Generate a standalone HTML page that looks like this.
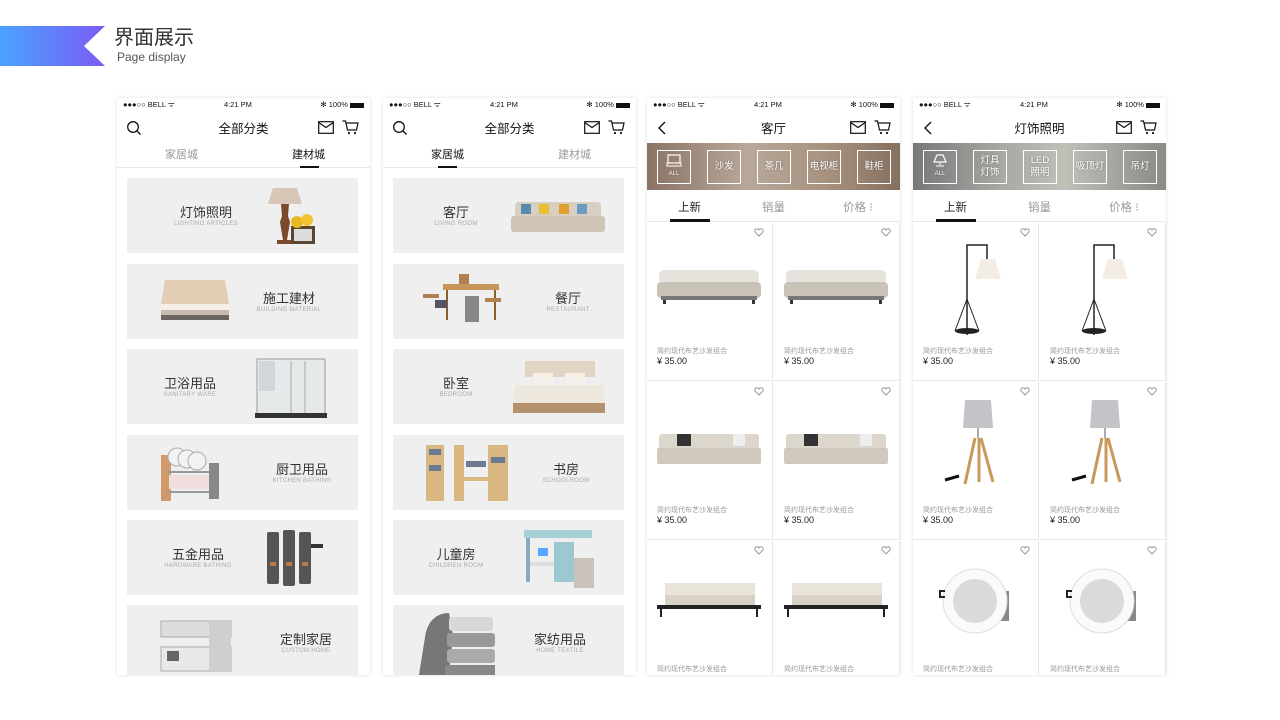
<!DOCTYPE html>
<html><head><meta charset="utf-8"><style>
*{margin:0;padding:0;box-sizing:border-box}
body{width:1280px;height:720px;background:#fff;position:relative;overflow:hidden;font-family:"Liberation Sans","Noto Sans CJK SC",sans-serif;color:#222}
.a{position:absolute}
.phone{position:absolute;top:98px;width:253px;height:577px;background:#fff;box-shadow:0 0 4px rgba(0,0,0,.12);overflow:hidden}
.sb{position:absolute;top:2px;left:0;width:100%;height:12px;font-size:7.5px;color:#111}
.nav{position:absolute;top:20px;left:0;width:100%;text-align:center;font-size:12.5px;color:#111}
.tabs{position:absolute;top:44px;left:0;width:100%;height:26px;border-bottom:1px solid #e6e6e6;font-size:11px}
.card{position:absolute;left:10px;width:231px;height:75px;background:#efefef}
.card .t{position:absolute;width:110px;text-align:center;top:24px;font-size:13px;color:#333}
.card .e{position:absolute;width:110px;text-align:center;top:43px;font-size:6px;color:#aaa;letter-spacing:.3px}
.cell{position:absolute;width:126px;height:158px;border-right:1px solid #e8e8e8;border-bottom:1px solid #e8e8e8}
.cell .n{position:absolute;left:10px;top:123px;font-size:7px;color:#999}
.cell .p{position:absolute;left:10px;top:133px;font-size:9px;color:#222}
.cell .h{position:absolute;right:8px;top:5px}
.ban{position:absolute;top:45px;left:0;width:253px;height:47px;background:linear-gradient(90deg,#8a7365,#b8a89a 40%,#a89280 70%,#857060)}
.bx{position:absolute;top:7px;width:34px;height:34px;border:1.5px solid #fff;color:#fff;font-size:9.5px;text-align:center;display:flex;align-items:center;justify-content:center;line-height:12px;text-shadow:0 0 2px rgba(0,0,0,.4)}
</style></head><body>

<div class="a" style="left:0;top:26px;width:105px;height:40px;background:linear-gradient(90deg,#4aa3ff,#7b5cf5);clip-path:polygon(0 0,100% 0,80% 50%,100% 100%,0 100%)"></div>
<div class="a" style="left:114px;top:28px;font-size:20px;line-height:1;color:#333">界面展示</div>
<div class="a" style="left:117px;top:51px;font-size:12px;line-height:1;color:#555">Page display</div>

<!-- PHONE 1 -->
<div class="phone" style="left:117px">
 <div class="sb"><span class="a" style="left:6px">●●●○○ BELL ᯤ</span><span class="a" style="left:107px">4:21 PM</span><span class="a" style="right:6px">✻ 100% <span style="display:inline-block;width:14px;height:5px;background:#111;vertical-align:middle"></span></span></div>
 <svg class="a" style="left:9px;top:22px" width="16" height="16" viewBox="0 0 16 16"><circle cx="7" cy="7" r="5.3" fill="none" stroke="#111" stroke-width="1.3"/><path d="M11 11l3.5 3.5" stroke="#111" stroke-width="1.3"/></svg>
 <div class="nav">全部分类</div>
 <svg class="a" style="left:201px;top:23px" width="16" height="13" viewBox="0 0 16 13"><rect x=".7" y=".7" width="14.6" height="11.6" fill="none" stroke="#111" stroke-width="1.2"/><path d="M.7 1.5l7.3 5 7.3-5" fill="none" stroke="#111" stroke-width="1.2"/></svg>
 <svg class="a" style="left:225px;top:22px" width="17" height="15" viewBox="0 0 17 15"><path d="M.5 1h3l2 9h9l1.5-7H4.5" fill="none" stroke="#111" stroke-width="1.2"/><circle cx="7" cy="13" r="1.1" fill="#111"/><circle cx="13" cy="13" r="1.1" fill="#111"/></svg>
 <div class="tabs"><span class="a" style="left:48px;top:4px;color:#999">家居城</span><span class="a" style="left:175px;top:4px;color:#111">建材城</span><div class="a" style="left:183px;top:24px;width:19px;height:2px;background:#111"></div></div>

 <div class="card" style="top:80px"><div class="t" style="left:24px">灯饰照明</div><div class="e" style="left:24px">LIGHTING ARTICLES</div>
  <svg class="a" style="left:138px;top:8px" width="60" height="62"><path d="M8 2h24l5 16H3z" fill="#d8c7b6"/><path d="M16 18h8l-1 12 2 6-3 18h6v4H12v-4h6l-3-18 2-6z" fill="#7a4a2a"/><rect x="26" y="40" width="24" height="18" fill="#5a4530"/><rect x="29" y="43" width="18" height="12" fill="#ddd"/><circle cx="32" cy="36" r="6" fill="#e8b820"/><circle cx="42" cy="34" r="6" fill="#f0c330"/></svg></div>
 <div class="card" style="top:166px"><div class="t" style="left:107px">施工建材</div><div class="e" style="left:107px">BUILDING MATERIAL</div>
  <svg class="a" style="left:32px;top:14px" width="72" height="46"><path d="M6 2h60l4 24H2z" fill="#e4cdb5"/><rect x="2" y="26" width="68" height="6" fill="#f4eee8"/><rect x="2" y="32" width="68" height="5" fill="#c8bcb2"/><rect x="2" y="37" width="68" height="5" fill="#6c6460"/></svg></div>
 <div class="card" style="top:251px"><div class="t" style="left:8px">卫浴用品</div><div class="e" style="left:8px">SANITARY WARE</div>
  <svg class="a" style="left:128px;top:8px" width="72" height="64"><rect x="2" y="2" width="68" height="56" fill="#e6e9ea" stroke="#999"/><rect x="4" y="4" width="16" height="30" fill="#cfd6dc"/><path d="M36 4v54M50 4v54" stroke="#aaa"/><rect x="0" y="56" width="72" height="5" fill="#333"/></svg></div>
 <div class="card" style="top:337px"><div class="t" style="left:120px">厨卫用品</div><div class="e" style="left:120px">KITCHEN BATHING</div>
  <svg class="a" style="left:32px;top:8px" width="66" height="62"><rect x="2" y="12" width="10" height="46" fill="#d29a6a"/><g fill="#f2f2f2" stroke="#aaa"><circle cx="18" cy="14" r="9"/><circle cx="28" cy="16" r="9"/><circle cx="38" cy="18" r="9"/></g><rect x="8" y="28" width="52" height="2" fill="#999"/><rect x="8" y="48" width="52" height="2" fill="#999"/><rect x="10" y="32" width="40" height="14" fill="#f0dede"/><rect x="50" y="20" width="10" height="36" fill="#888"/></svg></div>
 <div class="card" style="top:422px"><div class="t" style="left:16px">五金用品</div><div class="e" style="left:16px">HARDWARE BATHING</div>
  <svg class="a" style="left:138px;top:8px" width="60" height="62"><g fill="#555"><rect x="2" y="4" width="12" height="52" rx="2"/><rect x="18" y="2" width="12" height="56" rx="2"/><rect x="34" y="4" width="12" height="52" rx="2"/></g><g fill="#b87a4a"><rect x="5" y="34" width="6" height="4"/><rect x="21" y="34" width="6" height="4"/><rect x="37" y="34" width="6" height="4"/></g><rect x="46" y="16" width="12" height="4" fill="#333"/></svg></div>
 <div class="card" style="top:507px"><div class="t" style="left:124px">定制家居</div><div class="e" style="left:124px">CUSTOM HOME</div>
  <svg class="a" style="left:32px;top:12px" width="76" height="56"><rect x="2" y="4" width="70" height="16" fill="#ddd" stroke="#aaa"/><rect x="2" y="30" width="70" height="24" fill="#e8e8e8" stroke="#aaa"/><rect x="50" y="4" width="22" height="50" fill="#cfcfcf"/><rect x="8" y="34" width="12" height="10" fill="#666"/></svg></div>
</div>

<!-- PHONE 2 -->
<div class="phone" style="left:383px">
 <div class="sb"><span class="a" style="left:6px">●●●○○ BELL ᯤ</span><span class="a" style="left:107px">4:21 PM</span><span class="a" style="right:6px">✻ 100% <span style="display:inline-block;width:14px;height:5px;background:#111;vertical-align:middle"></span></span></div>
 <svg class="a" style="left:9px;top:22px" width="16" height="16" viewBox="0 0 16 16"><circle cx="7" cy="7" r="5.3" fill="none" stroke="#111" stroke-width="1.3"/><path d="M11 11l3.5 3.5" stroke="#111" stroke-width="1.3"/></svg>
 <div class="nav">全部分类</div>
 <svg class="a" style="left:201px;top:23px" width="16" height="13" viewBox="0 0 16 13"><rect x=".7" y=".7" width="14.6" height="11.6" fill="none" stroke="#111" stroke-width="1.2"/><path d="M.7 1.5l7.3 5 7.3-5" fill="none" stroke="#111" stroke-width="1.2"/></svg>
 <svg class="a" style="left:225px;top:22px" width="17" height="15" viewBox="0 0 17 15"><path d="M.5 1h3l2 9h9l1.5-7H4.5" fill="none" stroke="#111" stroke-width="1.2"/><circle cx="7" cy="13" r="1.1" fill="#111"/><circle cx="13" cy="13" r="1.1" fill="#111"/></svg>
 <div class="tabs"><span class="a" style="left:48px;top:4px;color:#111">家居城</span><span class="a" style="left:175px;top:4px;color:#999">建材城</span><div class="a" style="left:55px;top:24px;width:19px;height:2px;background:#111"></div></div>

 <div class="card" style="top:80px"><div class="t" style="left:8px">客厅</div><div class="e" style="left:8px">LIVING ROOM</div>
  <svg class="a" style="left:118px;top:20px" width="94" height="40"><rect x="4" y="4" width="86" height="18" rx="4" fill="#d8cfc2"/><rect x="10" y="6" width="10" height="10" fill="#5a8ab0"/><rect x="28" y="6" width="10" height="10" fill="#e8c030"/><rect x="48" y="6" width="10" height="10" fill="#e0a030"/><rect x="66" y="6" width="10" height="10" fill="#6a9bc0"/><rect x="0" y="18" width="94" height="16" rx="3" fill="#cfc4b5"/></svg></div>
 <div class="card" style="top:166px"><div class="t" style="left:120px">餐厅</div><div class="e" style="left:120px">RESTAURANT</div>
  <svg class="a" style="left:22px;top:6px" width="100" height="64"><rect x="28" y="14" width="56" height="6" fill="#c8955a"/><path d="M32 20v30M80 20v30" stroke="#8a6030" stroke-width="2"/><g fill="#b58050"><rect x="8" y="24" width="16" height="4"/><rect x="44" y="4" width="10" height="10"/><rect x="70" y="28" width="16" height="4"/></g><rect x="50" y="26" width="14" height="26" fill="#888"/><rect x="20" y="30" width="12" height="8" fill="#556"/></svg></div>
 <div class="card" style="top:251px"><div class="t" style="left:8px">卧室</div><div class="e" style="left:8px">BEDROOM</div>
  <svg class="a" style="left:118px;top:10px" width="96" height="60"><rect x="14" y="2" width="70" height="16" fill="#e0d4c4"/><path d="M4 26h88l2 20H2z" fill="#eee7dd"/><rect x="2" y="44" width="92" height="10" fill="#b49270"/><rect x="22" y="14" width="20" height="10" fill="#f6f0e8"/><rect x="54" y="14" width="20" height="10" fill="#f6f0e8"/></svg></div>
 <div class="card" style="top:337px"><div class="t" style="left:118px">书房</div><div class="e" style="left:118px">SCHOOLROOM</div>
  <svg class="a" style="left:33px;top:10px" width="82" height="56"><g fill="#d8b880"><rect x="0" y="0" width="18" height="56"/><rect x="28" y="0" width="10" height="56"/><rect x="62" y="0" width="20" height="56"/><rect x="38" y="32" width="24" height="4"/></g><g fill="#6a7a90"><rect x="3" y="4" width="12" height="6"/><rect x="3" y="20" width="12" height="6"/><rect x="65" y="12" width="14" height="6"/><rect x="40" y="16" width="20" height="6"/></g></svg></div>
 <div class="card" style="top:422px"><div class="t" style="left:8px">儿童房</div><div class="e" style="left:8px">CHILDREN ROOM</div>
  <svg class="a" style="left:131px;top:8px" width="80" height="64"><rect x="0" y="2" width="68" height="8" fill="#a8d0d8"/><rect x="2" y="10" width="4" height="44" fill="#8ab"/><rect x="30" y="14" width="20" height="40" fill="#9cc8d2"/><rect x="6" y="34" width="24" height="4" fill="#ddd"/><path d="M50 30h20v30H50z" fill="#c9c2bb"/><rect x="14" y="20" width="10" height="8" fill="#5af"/></svg></div>
 <div class="card" style="top:507px"><div class="t" style="left:112px">家纺用品</div><div class="e" style="left:112px">HOME TEXTILE</div>
  <svg class="a" style="left:26px;top:4px" width="84" height="66"><path d="M30 4c-14 0-22 10-24 24L0 66h30l4-40z" fill="#777"/><rect x="30" y="8" width="44" height="14" rx="3" fill="#d8d8d8"/><rect x="28" y="24" width="48" height="14" rx="3" fill="#999"/><rect x="28" y="40" width="48" height="14" rx="3" fill="#aaa"/><rect x="26" y="56" width="50" height="10" fill="#888"/></svg></div>
</div>

<!-- PHONE 3 -->
<div class="phone" style="left:647px">
 <div class="sb"><span class="a" style="left:6px">●●●○○ BELL ᯤ</span><span class="a" style="left:107px">4:21 PM</span><span class="a" style="right:6px">✻ 100% <span style="display:inline-block;width:14px;height:5px;background:#111;vertical-align:middle"></span></span></div>
 <svg class="a" style="left:10px;top:22px" width="10" height="16"><path d="M8 2L2 8l6 6" fill="none" stroke="#111" stroke-width="1.4"/></svg>
 <div class="nav">客厅</div>
 <svg class="a" style="left:203px;top:23px" width="16" height="13" viewBox="0 0 16 13"><rect x=".7" y=".7" width="14.6" height="11.6" fill="none" stroke="#111" stroke-width="1.2"/><path d="M.7 1.5l7.3 5 7.3-5" fill="none" stroke="#111" stroke-width="1.2"/></svg>
 <svg class="a" style="left:227px;top:22px" width="17" height="15" viewBox="0 0 17 15"><path d="M.5 1h3l2 9h9l1.5-7H4.5" fill="none" stroke="#111" stroke-width="1.2"/><circle cx="7" cy="13" r="1.1" fill="#111"/><circle cx="13" cy="13" r="1.1" fill="#111"/></svg>
 <div class="ban">
  <div class="bx" style="left:10px;flex-direction:column;font-size:6px"><svg width="16" height="14"><rect x="2" y="1" width="12" height="8" fill="none" stroke="#fff" stroke-width="1.2"/><rect x="1" y="9" width="14" height="3" fill="none" stroke="#fff"/></svg>ALL</div>
  <div class="bx" style="left:60px">沙发</div><div class="bx" style="left:110px">茶几</div><div class="bx" style="left:160px">电视柜</div><div class="bx" style="left:210px">鞋柜</div>
 </div>
 <div class="a" style="left:0;top:94px;width:253px;height:30px;border-bottom:1px solid #e6e6e6;font-size:11.5px">
  <span class="a" style="left:31px;top:7px;color:#222">上新</span><span class="a" style="left:115px;top:7px;color:#999">销量</span><span class="a" style="left:196px;top:7px;color:#999">价格 ⁝</span>
  <div class="a" style="left:23px;top:27px;width:40px;height:3px;background:#111"></div></div>
 <div class="cell" style="left:0;top:125px"><svg class="h" width="10" height="9"><path d="M5 8L1 4a2 2 0 014-2 2 2 0 014 2z" fill="none" stroke="#999"/></svg><svg class="a" style="left:8px;top:45px" width="108" height="40"><rect x="4" y="2" width="100" height="14" rx="5" fill="#e6e2dc"/><rect x="2" y="14" width="104" height="16" rx="4" fill="#c9c2b6"/><rect x="6" y="28" width="96" height="4" fill="#777"/><rect x="8" y="32" width="3" height="4" fill="#333"/><rect x="97" y="32" width="3" height="4" fill="#333"/></svg><div class="n">简约现代布艺沙发组合</div><div class="p">¥ 35.00</div></div>
 <div class="cell" style="left:127px;top:125px"><svg class="h" width="10" height="9"><path d="M5 8L1 4a2 2 0 014-2 2 2 0 014 2z" fill="none" stroke="#999"/></svg><svg class="a" style="left:8px;top:45px" width="108" height="40"><rect x="4" y="2" width="100" height="14" rx="5" fill="#e6e2dc"/><rect x="2" y="14" width="104" height="16" rx="4" fill="#c9c2b6"/><rect x="6" y="28" width="96" height="4" fill="#777"/><rect x="8" y="32" width="3" height="4" fill="#333"/><rect x="97" y="32" width="3" height="4" fill="#333"/></svg><div class="n">简约现代布艺沙发组合</div><div class="p">¥ 35.00</div></div>
 <div class="cell" style="left:0;top:284px"><svg class="h" width="10" height="9"><path d="M5 8L1 4a2 2 0 014-2 2 2 0 014 2z" fill="none" stroke="#999"/></svg><svg class="a" style="left:8px;top:48px" width="108" height="40"><rect x="4" y="4" width="100" height="16" rx="3" fill="#ddd6cc"/><rect x="2" y="18" width="104" height="16" rx="2" fill="#cfc8bc"/><rect x="22" y="4" width="14" height="12" fill="#333"/><rect x="78" y="4" width="12" height="12" fill="#eee"/></svg><div class="n">简约现代布艺沙发组合</div><div class="p">¥ 35.00</div></div>
 <div class="cell" style="left:127px;top:284px"><svg class="h" width="10" height="9"><path d="M5 8L1 4a2 2 0 014-2 2 2 0 014 2z" fill="none" stroke="#999"/></svg><svg class="a" style="left:8px;top:48px" width="108" height="40"><rect x="4" y="4" width="100" height="16" rx="3" fill="#ddd6cc"/><rect x="2" y="18" width="104" height="16" rx="2" fill="#cfc8bc"/><rect x="22" y="4" width="14" height="12" fill="#333"/><rect x="78" y="4" width="12" height="12" fill="#eee"/></svg><div class="n">简约现代布艺沙发组合</div><div class="p">¥ 35.00</div></div>
 <div class="cell" style="left:0;top:443px"><svg class="h" width="10" height="9"><path d="M5 8L1 4a2 2 0 014-2 2 2 0 014 2z" fill="none" stroke="#999"/></svg><svg class="a" style="left:8px;top:40px" width="108" height="40"><rect x="10" y="2" width="90" height="14" fill="#e8e4da"/><rect x="10" y="14" width="90" height="10" fill="#d8d2c6"/><rect x="2" y="24" width="104" height="4" fill="#222"/><path d="M6 28v8M102 28v8" stroke="#222" stroke-width="2"/></svg><div class="n">简约现代布艺沙发组合</div><div class="p">¥ 35.00</div></div>
 <div class="cell" style="left:127px;top:443px"><svg class="h" width="10" height="9"><path d="M5 8L1 4a2 2 0 014-2 2 2 0 014 2z" fill="none" stroke="#999"/></svg><svg class="a" style="left:8px;top:40px" width="108" height="40"><rect x="10" y="2" width="90" height="14" fill="#e8e4da"/><rect x="10" y="14" width="90" height="10" fill="#d8d2c6"/><rect x="2" y="24" width="104" height="4" fill="#222"/><path d="M6 28v8M102 28v8" stroke="#222" stroke-width="2"/></svg><div class="n">简约现代布艺沙发组合</div><div class="p">¥ 35.00</div></div>
</div>

<!-- PHONE 4 -->
<div class="phone" style="left:913px">
 <div class="sb"><span class="a" style="left:6px">●●●○○ BELL ᯤ</span><span class="a" style="left:107px">4:21 PM</span><span class="a" style="right:6px">✻ 100% <span style="display:inline-block;width:14px;height:5px;background:#111;vertical-align:middle"></span></span></div>
 <svg class="a" style="left:10px;top:22px" width="10" height="16"><path d="M8 2L2 8l6 6" fill="none" stroke="#111" stroke-width="1.4"/></svg>
 <div class="nav">灯饰照明</div>
 <svg class="a" style="left:203px;top:23px" width="16" height="13" viewBox="0 0 16 13"><rect x=".7" y=".7" width="14.6" height="11.6" fill="none" stroke="#111" stroke-width="1.2"/><path d="M.7 1.5l7.3 5 7.3-5" fill="none" stroke="#111" stroke-width="1.2"/></svg>
 <svg class="a" style="left:227px;top:22px" width="17" height="15" viewBox="0 0 17 15"><path d="M.5 1h3l2 9h9l1.5-7H4.5" fill="none" stroke="#111" stroke-width="1.2"/><circle cx="7" cy="13" r="1.1" fill="#111"/><circle cx="13" cy="13" r="1.1" fill="#111"/></svg>
 <div class="ban" style="background:linear-gradient(90deg,#777,#a8a8a4 35%,#c0bfb8 60%,#8a8a86)">
  <div class="bx" style="left:10px;flex-direction:column;font-size:6px"><svg width="16" height="14"><path d="M5 1h6l3 7H2z" fill="none" stroke="#fff" stroke-width="1.2"/><path d="M8 8v3M4 12h8" stroke="#fff"/></svg>ALL</div>
  <div class="bx" style="left:60px">灯具<br>灯饰</div><div class="bx" style="left:110px">LED<br>照明</div><div class="bx" style="left:160px">吸顶灯</div><div class="bx" style="left:210px">吊灯</div>
 </div>
 <div class="a" style="left:0;top:94px;width:253px;height:30px;border-bottom:1px solid #e6e6e6;font-size:11.5px">
  <span class="a" style="left:31px;top:7px;color:#222">上新</span><span class="a" style="left:115px;top:7px;color:#999">销量</span><span class="a" style="left:196px;top:7px;color:#999">价格 ⁝</span>
  <div class="a" style="left:23px;top:27px;width:40px;height:3px;background:#111"></div></div>
 <div class="cell" style="left:0;top:125px"><svg class="h" width="10" height="9"><path d="M5 8L1 4a2 2 0 014-2 2 2 0 014 2z" fill="none" stroke="#999"/></svg><svg class="a" style="left:34px;top:16px" width="60" height="98"><path d="M20 96V6h20v14" fill="none" stroke="#222" stroke-width="1.5"/><path d="M34 20h14l6 20H28z" fill="#f3ede3"/><path d="M20 60L8 92M20 60l12 32" stroke="#222"/><ellipse cx="20" cy="92" rx="12" ry="3" fill="#222"/></svg><div class="n">简约现代布艺沙发组合</div><div class="p">¥ 35.00</div></div>
 <div class="cell" style="left:127px;top:125px"><svg class="h" width="10" height="9"><path d="M5 8L1 4a2 2 0 014-2 2 2 0 014 2z" fill="none" stroke="#999"/></svg><svg class="a" style="left:34px;top:16px" width="60" height="98"><path d="M20 96V6h20v14" fill="none" stroke="#222" stroke-width="1.5"/><path d="M34 20h14l6 20H28z" fill="#f3ede3"/><path d="M20 60L8 92M20 60l12 32" stroke="#222"/><ellipse cx="20" cy="92" rx="12" ry="3" fill="#222"/></svg><div class="n">简约现代布艺沙发组合</div><div class="p">¥ 35.00</div></div>
 <div class="cell" style="left:0;top:284px"><svg class="h" width="10" height="9"><path d="M5 8L1 4a2 2 0 014-2 2 2 0 014 2z" fill="none" stroke="#999"/></svg><svg class="a" style="left:28px;top:16px" width="60" height="92"><path d="M24 2h26l2 28H22z" fill="#c4c4c8"/><path d="M37 30v10" stroke="#555"/><path d="M34 40L24 86M38 40v44M40 40l12 44" stroke="#c89a5a" stroke-width="3"/><path d="M4 82l14-4" stroke="#111" stroke-width="3"/></svg><div class="n">简约现代布艺沙发组合</div><div class="p">¥ 35.00</div></div>
 <div class="cell" style="left:127px;top:284px"><svg class="h" width="10" height="9"><path d="M5 8L1 4a2 2 0 014-2 2 2 0 014 2z" fill="none" stroke="#999"/></svg><svg class="a" style="left:28px;top:16px" width="60" height="92"><path d="M24 2h26l2 28H22z" fill="#c4c4c8"/><path d="M37 30v10" stroke="#555"/><path d="M34 40L24 86M38 40v44M40 40l12 44" stroke="#c89a5a" stroke-width="3"/><path d="M4 82l14-4" stroke="#111" stroke-width="3"/></svg><div class="n">简约现代布艺沙发组合</div><div class="p">¥ 35.00</div></div>
 <div class="cell" style="left:0;top:443px"><svg class="h" width="10" height="9"><path d="M5 8L1 4a2 2 0 014-2 2 2 0 014 2z" fill="none" stroke="#999"/></svg><svg class="a" style="left:26px;top:24px" width="76" height="70"><rect x="46" y="26" width="24" height="30" fill="#888"/><circle cx="36" cy="36" r="32" fill="#fafafa" stroke="#ddd"/><circle cx="36" cy="36" r="22" fill="#d8dadc"/><path d="M6 26H1v6h5" fill="none" stroke="#222" stroke-width="2"/></svg><div class="n">简约现代布艺沙发组合</div><div class="p">¥ 35.00</div></div>
 <div class="cell" style="left:127px;top:443px"><svg class="h" width="10" height="9"><path d="M5 8L1 4a2 2 0 014-2 2 2 0 014 2z" fill="none" stroke="#999"/></svg><svg class="a" style="left:26px;top:24px" width="76" height="70"><rect x="46" y="26" width="24" height="30" fill="#888"/><circle cx="36" cy="36" r="32" fill="#fafafa" stroke="#ddd"/><circle cx="36" cy="36" r="22" fill="#d8dadc"/><path d="M6 26H1v6h5" fill="none" stroke="#222" stroke-width="2"/></svg><div class="n">简约现代布艺沙发组合</div><div class="p">¥ 35.00</div></div>
</div>
</body></html>
